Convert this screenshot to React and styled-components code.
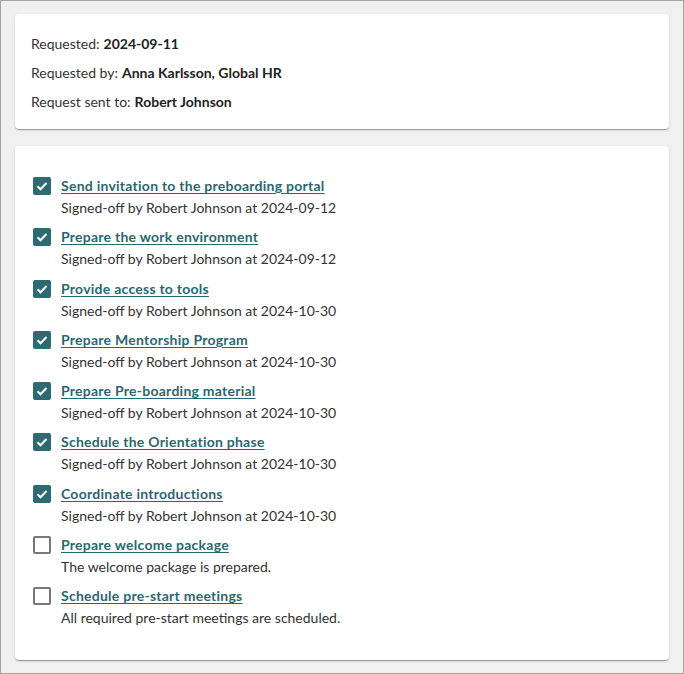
import styled, { createGlobalStyle } from 'styled-components'

const Global = createGlobalStyle`
  html, body { margin: 0; padding: 0; background: #f0f0f0; }
  body { font-family: Lato, "Open Sans", sans-serif; color: #333; }
`

const Page = styled.div`
  box-sizing: border-box;
  width: 684px;
  height: 674px;
  border: 1px solid #a3a3a3;
  background: #f0f0f0;
  padding: 13px 14px;
  display: flex;
  flex-direction: column;
  gap: 17px;
`

const Card = styled.section`
  background: #fff;
  border-radius: 4px;
  box-shadow: 0 2px 1px -1px rgba(0,0,0,.2), 0 1px 1px 0 rgba(0,0,0,.14), 0 1px 3px 0 rgba(0,0,0,.12);
  padding: ${p => p.$pad};
`

const Info = styled.div`
  display: flex;
  flex-direction: column;
  gap: 9px;
`

const InfoLine = styled.div`
  font-size: 14px;
  line-height: 20px;
  color: #333;
  b { font-weight: 700; color: #222; margin-left: 4px; }
`

const List = styled.ul`
  list-style: none;
  margin: 0;
  padding: 0;
  display: flex;
  flex-direction: column;
  gap: 9.3px;
`

const Item = styled.li`
  display: grid;
  grid-template-columns: 18px 1fr;
  column-gap: 10px;
`

const Box = styled.span`
  box-sizing: border-box;
  width: 18px;
  height: 18px;
  margin-top: 1px;
  border-radius: 2px;
  display: flex;
  align-items: center;
  justify-content: center;
  background: ${p => (p.$on ? '#2e6a72' : '#fff')};
  border: 2px solid ${p => (p.$on ? '#2e6a72' : '#777')};
`

const Title = styled.a`
  justify-self: start;
  font-size: 14px;
  line-height: 20px;
  font-weight: 700;
  letter-spacing: 0.25px;
  color: #2b6770;
  text-decoration: underline;
  text-underline-offset: 2px;
  cursor: pointer;
`

const Sub = styled.div`
  grid-column: 2;
  margin-top: 2px;
  font-size: 14px;
  line-height: 20px;
  color: #333;
`

const tasks = [
  ['Send invitation to the preboarding portal', true, 'Signed-off by Robert Johnson at 2024-09-12'],
  ['Prepare the work environment', true, 'Signed-off by Robert Johnson at 2024-09-12'],
  ['Provide access to tools', true, 'Signed-off by Robert Johnson at 2024-10-30'],
  ['Prepare Mentorship Program', true, 'Signed-off by Robert Johnson at 2024-10-30'],
  ['Prepare Pre-boarding material', true, 'Signed-off by Robert Johnson at 2024-10-30'],
  ['Schedule the Orientation phase', true, 'Signed-off by Robert Johnson at 2024-10-30'],
  ['Coordinate introductions', true, 'Signed-off by Robert Johnson at 2024-10-30'],
  ['Prepare welcome package', false, 'The welcome package is prepared.'],
  ['Schedule pre-start meetings', false, 'All required pre-start meetings are scheduled.'],
]

function Check({ on }) {
  return (
    <Box $on={on}>
      {on && (
        <svg width="14" height="14" viewBox="0 0 14 14">
          <path d="M2.5 7.2l3 3L11.5 4" fill="none" stroke="#fff" strokeWidth="2" />
        </svg>
      )}
    </Box>
  )
}

export default function App() {
  return (
    <Page>
      <Global />
      <Card $pad="20px 16px 17px">
        <Info>
          <InfoLine>Requested:<b>2024-09-11</b></InfoLine>
          <InfoLine>Requested by:<b>Anna Karlsson, Global HR</b></InfoLine>
          <InfoLine>Request sent to:<b>Robert Johnson</b></InfoLine>
        </Info>
      </Card>
      <Card $pad="30px 18px 32px">
        <List>
          {tasks.map(([t, on, s]) => (
            <Item key={t}>
              <Check on={on} />
              <Title>{t}</Title>
              <Sub>{s}</Sub>
            </Item>
          ))}
        </List>
      </Card>
    </Page>
  )
}
